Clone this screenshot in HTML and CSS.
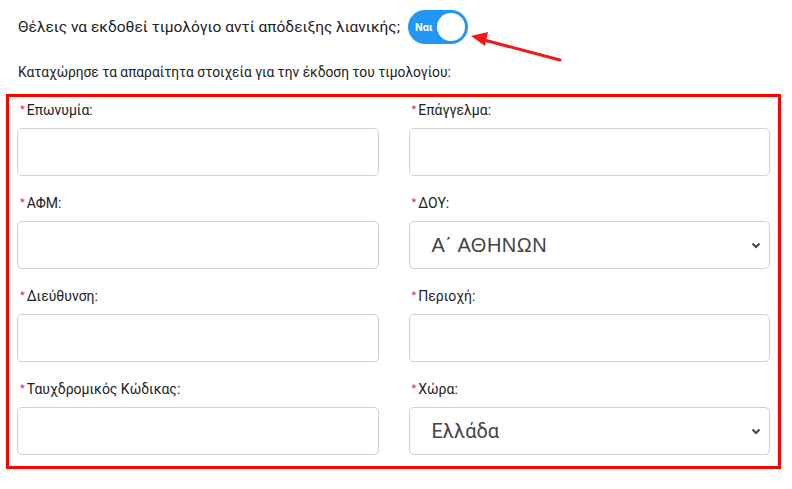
FILE: index.html
```html
<!DOCTYPE html>
<html lang="el">
<head>
<meta charset="utf-8">
<link rel="stylesheet" href="styles.css">
</head>
<body>
<div class="page">
  <div class="question">
    <span class="q-text">Θέλεις να εκδοθεί τιμολόγιο αντί απόδειξης λιανικής;</span>
    <span class="toggle"><span class="toggle-label">Ναι</span><span class="knob"></span></span>
  </div>
  <p class="intro">Καταχώρησε τα απαραίτητα στοιχεία για την έκδοση του τιμολογίου:</p>
  <div class="box">
    <div class="field">
      <div class="label"><span class="req">*</span>Επωνυμία:</div>
      <div class="input"></div>
    </div>
    <div class="field">
      <div class="label"><span class="req">*</span>Επάγγελμα:</div>
      <div class="input"></div>
    </div>
    <div class="field">
      <div class="label"><span class="req">*</span>ΑΦΜ:</div>
      <div class="input"></div>
    </div>
    <div class="field">
      <div class="label"><span class="req">*</span>ΔΟΥ:</div>
      <div class="input select"><span class="sel-text arial">Α΄ ΑΘΗΝΩΝ</span><svg class="chev" width="10" height="7" viewBox="0 0 10 7"><path d="M1.5 1.5 L5 5 L8.5 1.5" fill="none" stroke="#444" stroke-width="2"/></svg></div>
    </div>
    <div class="field">
      <div class="label"><span class="req">*</span>Διεύθυνση:</div>
      <div class="input"></div>
    </div>
    <div class="field">
      <div class="label"><span class="req">*</span>Περιοχή:</div>
      <div class="input"></div>
    </div>
    <div class="field">
      <div class="label"><span class="req">*</span>Ταυχδρομικός Κώδικας:</div>
      <div class="input"></div>
    </div>
    <div class="field">
      <div class="label"><span class="req">*</span>Χώρα:</div>
      <div class="input select"><span class="sel-text">Ελλάδα</span><svg class="chev" width="10" height="7" viewBox="0 0 10 7"><path d="M1.5 1.5 L5 5 L8.5 1.5" fill="none" stroke="#444" stroke-width="2"/></svg></div>
    </div>
  </div>
</div>
<svg class="arrow" width="792" height="489" viewBox="0 0 792 489">
  <line x1="560" y1="60" x2="484" y2="40" stroke="#f01818" stroke-width="3" stroke-linecap="round"/>
  <polygon points="471,36 488,32 485,46" fill="#f01818"/>
</svg>
</body>
</html>
```
FILE: styles.css
```css
html, body {
  margin: 0;
  padding: 0;
  background: #fff;
}
body {
  font-family: Roboto, "Noto Sans", sans-serif;
  color: #222;
  width: 792px;
  height: 489px;
  overflow: hidden;
  position: relative;
}
.page {
  padding: 10px 0 0 6px;
}
.question {
  display: flex;
  align-items: center;
  gap: 8px;
  padding-left: 12px;
  height: 34px;
}
.q-text {
  font-size: 15.5px;
  color: #222;
}
.toggle {
  width: 60px;
  height: 34px;
  border-radius: 17px;
  background: #2196f3;
  display: flex;
  align-items: center;
  justify-content: space-between;
  padding: 0 3px 0 7px;
  box-sizing: border-box;
}
.toggle-label {
  color: #fff;
  font-size: 11px;
  font-weight: 700;
}
.knob {
  width: 28px;
  height: 28px;
  border-radius: 50%;
  background: #fff;
}
.intro {
  margin: 19px 0 0 12px;
  font-size: 13.75px;
  color: #222;
  line-height: 18px;
}
.box {
  margin-top: 13px;
  width: 775px;
  height: 375px;
  box-sizing: border-box;
  border: 3px solid #ff0000;
  padding: 4px 8px 0 8px;
  display: grid;
  grid-template-columns: 1fr 1fr;
  column-gap: 30px;
  row-gap: 18px;
  align-content: start;
}
.field {
  display: flex;
  flex-direction: column;
  gap: 9px;
}
.label {
  font-size: 14px;
  line-height: 18px;
  color: #222;
  padding-left: 3px;
}
.req {
  color: #d6246e;
  font-size: 11px;
  margin-right: 2px;
  vertical-align: 2px;
}
.input {
  height: 48px;
  box-sizing: border-box;
  border: 1px solid #cfd0d4;
  border-radius: 5px;
  background: #fff;
}
.select {
  display: flex;
  align-items: center;
  justify-content: space-between;
  padding: 0 8px 0 22px;
}
.sel-text {
  font-size: 20px;
  color: #444;
}
.sel-text.arial {
  font-family: "Liberation Sans", Arial, sans-serif;
  font-size: 20px;
  letter-spacing: 0.5px;
}
.arrow {
  position: absolute;
  left: 0;
  top: 0;
  pointer-events: none;
}
```
